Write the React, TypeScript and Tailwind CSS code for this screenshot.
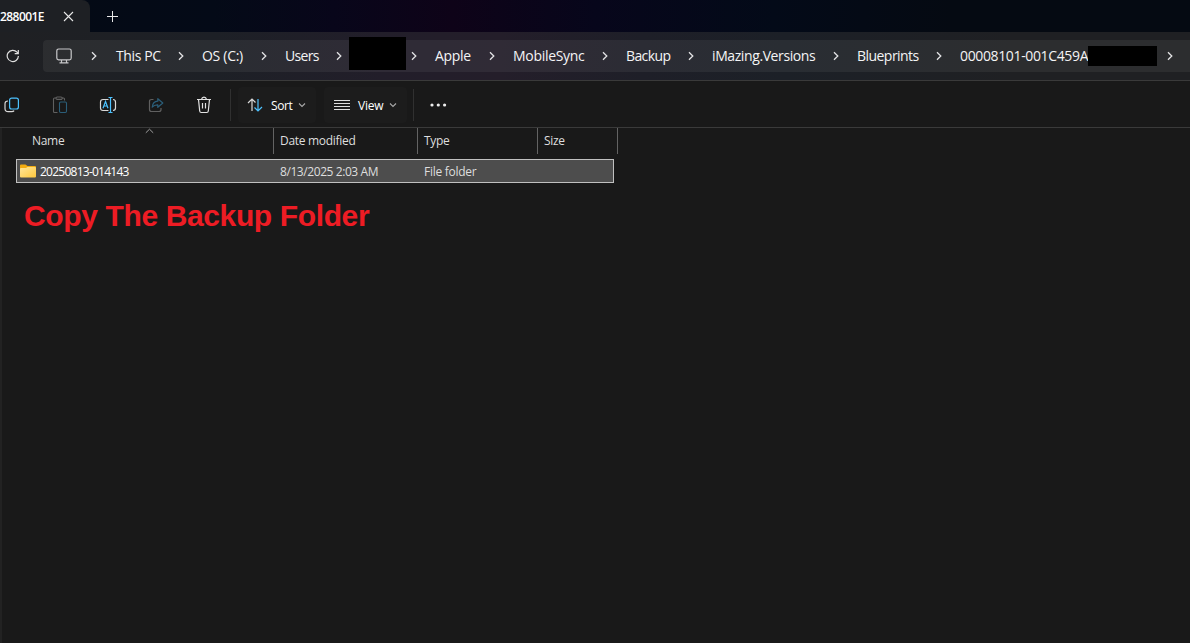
import type { ReactNode } from "react";

type Crumb = { label: string; width: string; tracking: string };

const crumbs: Crumb[] = [
  { label: "This PC", width: "w-[86px] pr-[17px]", tracking: "tracking-[-0.4px]" },
  { label: "OS (C:)", width: "w-[83px] pr-[17px]", tracking: "tracking-[-0.3px]" },
  { label: "Users", width: "w-[64px] pr-[6px]", tracking: "tracking-[-0.7px]" },
  { label: "", width: "w-[86px] pr-[17px]", tracking: "" },
  { label: "Apple", width: "w-[78px] pr-[17px]", tracking: "tracking-[-0.3px]" },
  { label: "MobileSync", width: "w-[113px] pr-[17px]", tracking: "tracking-[-0.3px]" },
  { label: "Backup", width: "w-[86px] pr-[17px]", tracking: "tracking-[-0.6px]" },
  { label: "iMazing.Versions", width: "w-[145px] pr-[17px]", tracking: "tracking-[-0.4px]" },
  { label: "Blueprints", width: "w-[103px] pr-[17px]", tracking: "tracking-[-0.54px]" },
];

function Chevron() {
  return (
    <svg width="8" height="10" viewBox="0 0 8 10" fill="none" stroke="#e4e4e6" strokeWidth="1.3" className="shrink-0">
      <path d="M2 1.2 5.8 5 2 8.8" />
    </svg>
  );
}

function SmallDown() {
  return (
    <svg width="8" height="6" viewBox="0 0 8 6" fill="none" stroke="#a8a8a8" strokeWidth="1.1">
      <path d="M1 1.5 4 4.5 7 1.5" />
    </svg>
  );
}

function Tool({ children, className = "" }: { children: ReactNode; className?: string }) {
  return <button className={`flex h-9 w-12 shrink-0 items-center justify-center ${className}`}>{children}</button>;
}

function TitleBar() {
  return (
    <div className="flex h-8 bg-[linear-gradient(90deg,#040a14_0%,#040a17_18%,#08061a_28%,#0e0318_38%,#07061b_50%,#030a18_65%,#050a12_80%,#050a12_100%)]">
      <div className="flex h-8 w-[90px] items-center rounded-tr-lg bg-[#1e2024]">
        <span className="w-[63px] pt-px text-[12px] font-semibold tracking-[-0.55px] text-white">288001E</span>
        <svg width="11" height="11" viewBox="0 0 11 11" stroke="#e8e8e8" strokeWidth="1.1">
          <path d="M1 1 10 10M10 1 1 10" />
        </svg>
      </div>
      <div className="flex w-[45px] items-center justify-center">
        <svg width="11" height="11" viewBox="0 0 11 11" stroke="#e8e8e8" strokeWidth="1">
          <path d="M5.5 0V11M0 5.5H11" />
        </svg>
      </div>
    </div>
  );
}

function AddressBar() {
  return (
    <div className="flex h-12 items-center bg-[linear-gradient(90deg,#1f2023_0%,#1d2026_18%,#221e2a_32%,#241e2a_42%,#1e1f28_54%,#1c2027_66%,#1f2023_85%,#1f2023_100%)]">
      <div className="flex w-[43px] shrink-0 pl-[6px]">
        <svg width="14" height="14" viewBox="0 0 14 14" fill="none" stroke="#e0e0e0" strokeWidth="1.2">
          <path d="M12.4 7A5.6 5.6 0 1 1 11 3.2L12.3 4.6M12.3 1V4.6H8.7" />
        </svg>
      </div>
      <div className="flex h-8 flex-1 items-center rounded-l-[4px] bg-white/[0.06] text-[14px] text-[#f4f4f5]">
        <div className="flex w-[73px] shrink-0 items-center pl-[13px]">
          <svg width="16" height="16" viewBox="0 0 16 16" fill="none" stroke="#c8c8ca" strokeWidth="1.2">
            <rect x="0.8" y="1" width="14.4" height="10.8" rx="1.8" />
            <path d="M5.5 12V14.6M10.5 12V14.6M3.5 14.8H12.5" />
          </svg>
          <div className="ml-[18px]">
            <Chevron />
          </div>
        </div>
        {crumbs.map((c, i) => (
          <div key={i} className={`flex shrink-0 items-center justify-between ${c.width}`}>
            {c.label ? (
              <span className={`leading-5 whitespace-nowrap ${c.tracking}`}>{c.label}</span>
            ) : (
              <span className="-mt-[5px] h-[33px] w-[57px] bg-black" />
            )}
            <Chevron />
          </div>
        ))}
        <span className="w-[128px] shrink-0 leading-5 tracking-[-0.36px] whitespace-nowrap">00008101-001C459A</span>
        <span className="h-5 w-[69px] shrink-0 bg-black" />
        <div className="ml-[9px]">
          <Chevron />
        </div>
      </div>
    </div>
  );
}

function Toolbar() {
  return (
    <div className="flex h-[48px] items-center border-y border-[#3a3a3a] bg-[#191919] pt-[2px] text-[12px] text-white">
      <Tool className="-ml-3">
        <svg width="16" height="16" viewBox="0 0 16 16" fill="none" strokeWidth="1.2">
          <rect x="5.6" y="1.2" width="8.8" height="10.8" rx="2" stroke="#4cc2ff" />
          <path d="M4 4C2 4 1 5 1 6.800V11.500C1 13.500 2.300 14.700 4.200 14.700H7.500C9 14.700 9.800 14.100 10.100 13.600" stroke="#d8d8d8" />
        </svg>
      </Tool>
      <Tool>
        <svg width="16" height="18" viewBox="0 0 16 18" fill="none" strokeWidth="1.1">
          <path d="M5.500 16.500H2.500Q1.500 16.500 1.500 15.500V3Q1.500 2 2.500 2H4M10 2H11.500Q12.500 2 12.500 3V4.500" stroke="#606060" />
          <rect x="4" y="1" width="6.200" height="2.400" rx="1.200" stroke="#606060" />
          <rect x="7.500" y="6" width="7" height="10.500" rx="1.200" stroke="#2b5e79" />
        </svg>
      </Tool>
      <Tool>
        <svg width="18" height="18" viewBox="0 0 18 18" fill="none" strokeWidth="1.200">
          <path d="M9.500 14.500H4Q1.500 14.500 1.500 12V6Q1.500 3.500 4 3.500H9.500M14 3.500Q16.500 3.700 16.500 6V12Q16.500 14.300 14 14.500" stroke="#d8d8d8" />
          <path d="M4 12.300 6.500 5.500 9 12.300M4.800 10H8.200M11.500 1.500V16.500M9.500 1.500H13.500M9.500 16.500H13.500" stroke="#4cc2ff" />
        </svg>
      </Tool>
      <Tool>
        <svg width="16" height="16" viewBox="0 0 16 16" fill="none" strokeWidth="1.200">
          <path d="M5.500 2.500H3.500Q1.500 2.500 1.500 4.500V12.500Q1.500 14.500 3.500 14.500H11Q13 14.500 13 12.500V11" stroke="#606060" />
          <path d="M9.800 1.700 14.800 6 9.800 10.300V7.900Q6.200 7.700 4.200 10.200 4.700 4.500 9.800 4.200Z" stroke="#2b5e79" strokeLinejoin="round" />
        </svg>
      </Tool>
      <Tool>
        <svg width="16" height="18" viewBox="0 0 16 18" fill="none" stroke="#e2e2e2" strokeWidth="1.200">
          <path d="M1 3.500H15M5.500 3.300Q6 1.200 8 1.200T10.500 3.300M2.500 3.500 3.700 15Q3.900 16.500 5.200 16.500H10.800Q12.100 16.500 12.300 15L13.500 3.500M6.500 7V12.500M9.500 7V12.500" />
        </svg>
      </Tool>
      <div className="ml-[2px] h-8 w-px bg-[#303030]" />
      <button className="ml-[7px] flex h-9 w-[78px] items-center rounded bg-[#1c1c1c] pl-[9px]">
        <svg width="16" height="14" viewBox="0 0 16 14" fill="none" strokeWidth="1.200">
          <path d="M5 13V1M1 5 5 1 8.500 4.500" stroke="#d8d8d8" />
          <path d="M11 1V13M7.500 9.500 11 13 15 9" stroke="#4cc2ff" />
        </svg>
        <span className="ml-2 w-[27px] pt-px text-left tracking-[-0.4px]">Sort</span>
        <SmallDown />
      </button>
      <button className="ml-2 flex h-9 w-[83px] items-center rounded bg-[#1c1c1c] pl-[10px]">
        <svg width="16" height="12" viewBox="0 0 16 12" stroke="#dedede" strokeWidth="1">
          <path d="M0 1.500H16M0 4.500H16M0 7.500H16M0 10.500H16" />
        </svg>
        <span className="ml-2 w-[31px] pt-px text-left tracking-[-0.2px]">View</span>
        <SmallDown />
      </button>
      <div className="ml-[6px] h-8 w-px bg-[#303030]" />
      <svg className="ml-4" width="17" height="4" viewBox="0 0 17 4" fill="#eeeeee">
        <circle cx="2" cy="2" r="1.600" />
        <circle cx="8.300" cy="2" r="1.600" />
        <circle cx="14.600" cy="2" r="1.600" />
      </svg>
    </div>
  );
}

function FileList() {
  return (
    <main className="flex-1 border-l-2 border-[#222222] text-[12px] text-[#dedede]">
      <div className="flex h-[26px] items-center tracking-[-0.3px]">
        <div className="relative flex h-full w-[272px] items-center border-r border-[#636363] pl-[30px]">
          Name
          <svg className="absolute top-0 left-[143px]" width="9" height="6" viewBox="0 0 9 6" fill="none" stroke="#a0a0a0">
            <path d="M0.800 4.800 4.500 1.200 8.200 4.800" />
          </svg>
        </div>
        <div className="flex h-full w-[144px] items-center border-r border-[#636363] pl-[6px]">Date modified</div>
        <div className="flex h-full w-[120px] items-center border-r border-[#636363] pl-[6px]">Type</div>
        <div className="flex h-full w-[80px] items-center border-r border-[#636363] pl-[6px]">Size</div>
      </div>
      <div className="mt-[5px] ml-[14px] flex h-6 w-[598px] items-center border border-[#c0c0c0] bg-[#4d4d4d]">
        <svg className="ml-[3px]" width="16" height="14" viewBox="0 0 16 14">
          <defs>
            <linearGradient id="folder" x1="0" y1="0" x2="1" y2="1">
              <stop offset="0" stopColor="#ffe69a" />
              <stop offset="1" stopColor="#ffc83c" />
            </linearGradient>
          </defs>
          <path d="M0 1.500Q0 0.500 1 0.500H5.500L7.500 2H15Q16 2 16 3V12H0Z" fill="#f3ac10" />
          <path d="M0 5Q0 4 1 4H6L7.500 3H15Q16 3 16 4V12.500Q16 13.500 15 13.500H1Q0 13.500 0 12.500Z" fill="url(#folder)" />
        </svg>
        <span className="ml-1 w-[240px] pt-[2px] tracking-[-0.75px] text-white">20250813-014143</span>
        <span className="w-[144px] pt-[2px] tracking-[-0.42px]">8/13/2025 2:03 AM</span>
        <span className="pt-[2px] tracking-[-0.27px]">File folder</span>
      </div>
      <h1 className="mt-[14px] ml-[22px] font-['Liberation_Sans'] text-[30px] leading-[38px] font-bold tracking-[-0.37px] text-[#ed1c24]">
        Copy The Backup Folder
      </h1>
    </main>
  );
}

export default function App() {
  return (
    <div className="flex h-[643px] w-[1190px] flex-col overflow-hidden bg-[#191919] font-['Open_Sans','Noto_Sans',sans-serif]">
      <TitleBar />
      <AddressBar />
      <Toolbar />
      <FileList />
    </div>
  );
}
